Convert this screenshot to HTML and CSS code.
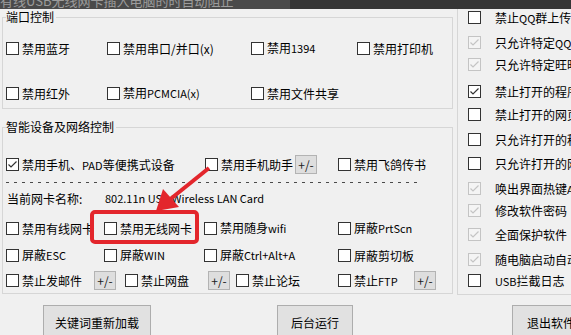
FILE: index.html
```html
<!DOCTYPE html>
<html lang="zh-CN">
<head>
<meta charset="utf-8">
<title>控制面板</title>
<link rel="stylesheet" href="styles.css">
</head>
<body>
<div class="titlebar"><span class="ttext">有线USB无线网卡插入电脑的时自动阻止</span></div>
<div class="main">
  <div class="left">
    <fieldset class="group g1">
      <legend>端口控制</legend>
      <div class="row cols-port">
        <label class="item"><span class="cb"></span><span>禁用蓝牙</span></label>
        <label class="item"><span class="cb"></span><span>禁用串口/并口(x)</span></label>
        <label class="item"><span class="cb"></span><span>禁用<span class="en">1394</span></span></label>
        <label class="item"><span class="cb"></span><span>禁用打印机</span></label>
      </div>
      <div class="row cols-port r2">
        <label class="item"><span class="cb"></span><span>禁用红外</span></label>
        <label class="item"><span class="cb"></span><span>禁用<span class="en">PCMCIA(x)</span></span></label>
        <label class="item"><span class="cb"></span><span>禁用文件共享</span></label>
      </div>
    </fieldset>
    <fieldset class="group g2">
      <legend>智能设备及网络控制</legend>
      <div class="row cols-a ra">
        <label class="item"><span class="cb"><svg viewBox="0 0 11 11" class="chk"><polyline points="1.5,5.5 4,8 9.5,2.5"/></svg></span><span>禁用手机、<span class="en">PAD</span>等便携式设备</span></label>
        <label class="item"><span class="cb"></span><span>禁用手机助手</span></label>
        <span class="pm">+/-</span>
        <label class="item"><span class="cb"></span><span>禁用飞鸽传书</span></label>
      </div>
      <div class="dash"></div>
      <div class="row cols-nic rnic">
        <span>当前网卡名称:</span>
        <span class="en">802.11n USB Wireless LAN Card</span>
      </div>
      <div class="row cols-b rb">
        <label class="item"><span class="cb"></span><span>禁用有线网卡</span></label>
        <label class="item"><span class="cb"></span><span>禁用无线网卡</span></label>
        <label class="item"><span class="cb"></span><span>禁用随身<span class="en">wifi</span></span></label>
        <label class="item"><span class="cb"></span><span>屏蔽<span class="en">PrtScn</span></span></label>
      </div>
      <div class="row cols-b rc">
        <label class="item"><span class="cb"></span><span>屏蔽<span class="en">ESC</span></span></label>
        <label class="item"><span class="cb"></span><span>屏蔽<span class="en">WIN</span></span></label>
        <label class="item"><span class="cb"></span><span>屏蔽<span class="en">Ctrl+Alt+A</span></span></label>
        <label class="item"><span class="cb"></span><span>屏蔽剪切板</span></label>
      </div>
      <div class="row cols-d rd">
        <label class="item"><span class="cb"></span><span>禁止发邮件</span></label>
        <span class="pm">+/-</span>
        <label class="item"><span class="cb"></span><span>禁止网盘</span></label>
        <span class="pm">+/-</span>
        <label class="item"><span class="cb"></span><span>禁止论坛</span></label>
        <label class="item"><span class="cb"></span><span>禁止<span class="en">FTP</span></span></label>
        <span class="pm">+/-</span>
      </div>
    </fieldset>
  </div>
  <div class="right">
    <label class="ritem"><span class="cb"></span><span>禁止<span class="en">QQ</span>群上传文件</span></label>
    <label class="ritem"><span class="cb dis"><svg viewBox="0 0 11 11" class="chk"><polyline points="1.5,5.5 4,8 9.5,2.5"/></svg></span><span>只允许特定<span class="en">QQ</span>登录</span></label>
    <label class="ritem"><span class="cb dis"><svg viewBox="0 0 11 11" class="chk"><polyline points="1.5,5.5 4,8 9.5,2.5"/></svg></span><span>只允许特定旺旺登录</span></label>
    <label class="ritem"><span class="cb"><svg viewBox="0 0 11 11" class="chk"><polyline points="1.5,5.5 4,8 9.5,2.5"/></svg></span><span>禁止打开的程序</span></label>
    <label class="ritem"><span class="cb"></span><span>禁止打开的网页</span></label>
    <label class="ritem"><span class="cb"></span><span>只允许打开的程序</span></label>
    <label class="ritem"><span class="cb"></span><span>只允许打开的网页</span></label>
    <label class="ritem"><span class="cb dis"><svg viewBox="0 0 11 11" class="chk"><polyline points="1.5,5.5 4,8 9.5,2.5"/></svg></span><span>唤出界面热键<span class="en">Alt+F1</span></span></label>
    <label class="ritem"><span class="cb dis"><svg viewBox="0 0 11 11" class="chk"><polyline points="1.5,5.5 4,8 9.5,2.5"/></svg></span><span>修改软件密码</span></label>
    <label class="ritem"><span class="cb dis"><svg viewBox="0 0 11 11" class="chk"><polyline points="1.5,5.5 4,8 9.5,2.5"/></svg></span><span>全面保护软件</span></label>
    <label class="ritem"><span class="cb dis"><svg viewBox="0 0 11 11" class="chk"><polyline points="1.5,5.5 4,8 9.5,2.5"/></svg></span><span>随电脑启动自动运行</span></label>
    <label class="ritem"><span class="cb"></span><span><span class="en">USB</span>拦截日志</span></label>
  </div>
</div>
<div class="buttons">
  <button class="btn btn-reload">关键词重新加载</button>
  <button class="btn btn-bg">后台运行</button>
  <button class="btn btn-exit">退出软件</button>
</div>
<div class="redbox"></div>
<svg class="arrow" viewBox="0 0 571 335" width="571" height="335">
  <line x1="209" y1="168" x2="168" y2="201" class="shaft"/>
  <polygon points="156,211 163,189 179,207" class="head"/>
</svg>
</body>
</html>
```
FILE: styles.css
```css
* { box-sizing: border-box; }
html, body { margin: 0; padding: 0; }
body {
  width: 571px;
  height: 335px;
  overflow: hidden;
  position: relative;
  background: #f0f0f0;
  color: #000;
  font-family: "Noto Sans CJK SC", "Liberation Sans", sans-serif;
  font-size: 12px;
  line-height: 17px;
}
.titlebar {
  height: 9px;
  overflow: hidden;
  background: linear-gradient(to right, #4a4a4a 0 290px, #363636 290px);
  white-space: nowrap;
}
.ttext {
  display: block;
  margin-top: -8px;
  color: #9c9c9c;
  font-size: 13px;
  line-height: 17px;
}
.main {
  display: flex;
  height: 286px;
}
.left { width: 457px; flex: none; }
.group {
  margin: 0 0 0 2px;
  padding: 0 0 0 3px;
  width: 451px;
  border: 1px solid #d6d6d6;
  min-inline-size: 0;
}
.group legend {
  padding: 0 2px 0 0;
  margin: 0;
  font-size: 12px;
  line-height: 14px;
}
.g1 { margin-top: 1px; padding-top: 15px; padding-bottom: 7px; }
.g2 { margin-top: 11px; padding-top: 21px; padding-bottom: 5px; }
.row {
  display: grid;
  height: 17px;
  align-items: center;
  white-space: nowrap;
}
.cols-port { grid-template-columns: 101px 144px 106px auto; }
.r2 { margin-top: 28px; }
.cols-a { grid-template-columns: 199px 90px 43px auto; }
.cols-nic { grid-template-columns: 98px auto; padding-left: 1px; }
.cols-b { grid-template-columns: 98px 100px 134px auto; }
.cols-d { grid-template-columns: 88px 31px 83px 28px 102px 76px auto; }
.dash {
  margin-top: 10px;
  width: 411px;
  height: 1px;
  background: repeating-linear-gradient(to right, #4a4a4a 0 3px, transparent 3px 8px);
}
.rnic { margin-top: 7px; }
.rb { margin-top: 12px; }
.rc { margin-top: 10px; }
.rd { margin-top: 8px; }
.item {
  display: flex;
  align-items: center;
  gap: 3px;
}
.en { font-size: 11px; }
.cb {
  width: 13px;
  height: 13px;
  flex: none;
  border: 1px solid #333;
  background: #fff;
  display: flex;
  align-items: center;
  justify-content: center;
}
.cb .chk {
  width: 11px;
  height: 11px;
  fill: none;
  stroke: #333;
  stroke-width: 1.2;
}
.cb.dis { border-color: #c4c4c4; background: #f4f4f4; }
.cb.dis .chk { stroke: #c4c4c4; }
.pm {
  width: 22px;
  height: 19px;
  border: 1px solid #b3b3b3;
  background: #dedede;
  display: flex;
  align-items: center;
  justify-content: center;
  font-size: 12px;
  color: #222;
}
.right {
  width: 114px;
  flex: none;
  border-left: 1px solid #d6d6d6;
  border-bottom: 1px solid #d6d6d6;
  padding: 0 0 0 10px;
  display: grid;
  grid-template-rows: 25px 22px 27px 23px 25px 24px 25px 22px 24px 25px 21px 17px;
  align-content: start;
  white-space: nowrap;
}
.ritem {
  display: flex;
  align-items: center;
  gap: 14px;
  height: 17px;
}
.buttons {
  display: flex;
  margin-top: 10px;
  white-space: nowrap;
}
.btn {
  height: 34px;
  border: 1px solid #adadad;
  background: #e1e1e1;
  font-family: "Noto Sans CJK SC", "Liberation Sans", sans-serif;
  font-size: 12px;
  color: #000;
  padding: 0;
  flex: none;
}
.btn-reload { margin-left: 43px; width: 108px; }
.btn-bg { margin-left: 126px; width: 76px; }
.btn-exit { margin-left: 159px; width: 78px; }
.redbox {
  position: absolute;
  left: 90px;
  top: 210px;
  width: 109px;
  height: 34px;
  border: 4px solid #e3262c;
  border-radius: 5px;
}
.arrow {
  position: absolute;
  left: 0;
  top: 0;
  pointer-events: none;
}
.arrow .shaft { stroke: #e3262c; stroke-width: 4; }
.arrow .head { fill: #e3262c; }
```
